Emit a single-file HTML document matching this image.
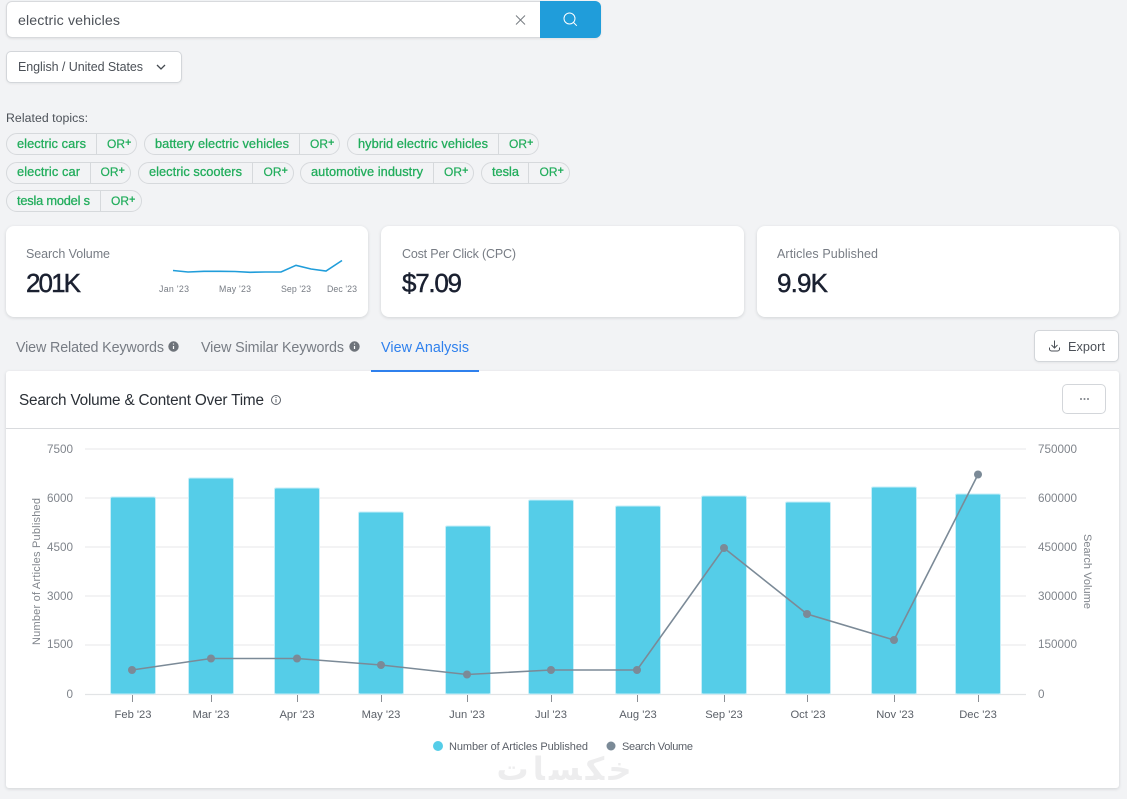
<!DOCTYPE html>
<html><head><meta charset="utf-8"><style>
html,body{margin:0;padding:0;width:1127px;height:799px;overflow:hidden;background:#f2f3f5;font-family:"Liberation Sans",sans-serif}
.b{position:absolute;box-sizing:border-box}
.card{position:absolute;background:#fff;border-radius:8px;box-shadow:0 1px 3px rgba(60,70,80,.18)}
svg{position:absolute;left:0;top:0}
.chip{fill:#f2f3f5;stroke:#d6d9dc}
.c{font-size:12.8px;fill:#22ad5c;stroke:#22ad5c;stroke-width:.28px}
.o{font-size:12px;fill:#22ad5c;stroke:#22ad5c;stroke-width:.2px}
.p{font-size:11px;font-weight:700;fill:#22ad5c}
.ax{font-size:11.7px;fill:#80858c}
.mo{font-size:11.2px;fill:#5b6068;text-anchor:middle}
.big{font-size:26px;fill:#1a2030;stroke:#1a2030;stroke-width:.45px}
</style></head><body>
<div class="b" style="left:6px;top:1px;width:595px;height:37px;background:#fff;border:1px solid #d8dadd;border-radius:6px;box-shadow:0 1px 2px rgba(0,0,0,.08)"></div>
<div class="b" style="left:540px;top:1px;width:61px;height:37px;background:#209dda;border-radius:0 6px 6px 0"></div>
<div class="b" style="left:6px;top:51px;width:176px;height:32px;background:#fff;border:1px solid #d3d6da;border-radius:5px;box-shadow:0 1px 2px rgba(0,0,0,.06)"></div>
<div class="card" style="left:6px;top:226px;width:362px;height:91px"></div>
<div class="card" style="left:381px;top:226px;width:363px;height:91px"></div>
<div class="card" style="left:757px;top:226px;width:362px;height:91px"></div>
<div class="b" style="left:1034px;top:330px;width:85px;height:32px;background:#fff;border:1px solid #d3d6da;border-radius:5px;box-shadow:0 1px 2px rgba(0,0,0,.06)"></div>
<div class="card" style="left:6px;top:371px;width:1113px;height:417px;border-radius:3px"></div>
<div class="b" style="left:6px;top:428px;width:1113px;height:1px;background:#d9dbde"></div>
<div class="b" style="left:1062px;top:384px;width:44px;height:30px;background:#fff;border:1px solid #d3d6da;border-radius:5px"></div>
<div class="b" style="left:371px;top:370px;width:108px;height:2px;background:#2f80ed"></div>

<svg width="1127" height="799" viewBox="0 0 1127 799" xmlns="http://www.w3.org/2000/svg">
<text x="18" y="25" font-size="14.200" fill="#4c5158" textLength="102">electric vehicles</text>
<path d="M516 15.500l9 9M525 15.500l-9 9" stroke="#777c82" stroke-width="1" fill="none"/>
<circle cx="569.500" cy="18.500" r="5.500" stroke="#fff" stroke-width="1" fill="none"/><path d="M573.400 22.400l3.400 3.400" stroke="#fff" stroke-width="1"/>
<text x="18" y="71" font-size="12.500" fill="#4c5158" textLength="125">English / United States</text>
<path d="M157 65l4 4 4-4" stroke="#444a50" stroke-width="1.300" fill="none"/>
<text x="6" y="122" font-size="12.300" fill="#4c5158" textLength="82">Related topics:</text>

<g>
<rect class="chip" x="6.500" y="133.500" width="130" height="21" rx="10.500"/><path d="M96.500 134v21" stroke="#d6d9dc"/>
<text class="c" x="17" y="148" textLength="69">electric cars</text><text class="o" x="107" y="148" textLength="18">OR</text><text class="p" x="125" y="146">+</text>
<rect class="chip" x="144.500" y="133.500" width="195" height="21" rx="10.500"/><path d="M299.500 134v21" stroke="#d6d9dc"/>
<text class="c" x="155" y="148" textLength="134">battery electric vehicles</text><text class="o" x="310" y="148" textLength="18">OR</text><text class="p" x="328" y="146">+</text>
<rect class="chip" x="347.500" y="133.500" width="191" height="21" rx="10.500"/><path d="M498.500 134v21" stroke="#d6d9dc"/>
<text class="c" x="358" y="148" textLength="130">hybrid electric vehicles</text><text class="o" x="509" y="148" textLength="18">OR</text><text class="p" x="527" y="146">+</text>

<rect class="chip" x="6.500" y="162.500" width="124" height="21" rx="10.500"/><path d="M90.500 163v21" stroke="#d6d9dc"/>
<text class="c" x="17" y="176" textLength="63">electric car</text><text class="o" x="100.500" y="176" textLength="18">OR</text><text class="p" x="118.500" y="174">+</text>
<rect class="chip" x="138.500" y="162.500" width="155" height="21" rx="10.500"/><path d="M252.500 163v21" stroke="#d6d9dc"/>
<text class="c" x="149" y="176" textLength="93">electric scooters</text><text class="o" x="263.500" y="176" textLength="18">OR</text><text class="p" x="281.500" y="174">+</text>
<rect class="chip" x="300.500" y="162.500" width="173" height="21" rx="10.500"/><path d="M433.500 163v21" stroke="#d6d9dc"/>
<text class="c" x="311" y="176" textLength="112">automotive industry</text><text class="o" x="444" y="176" textLength="18">OR</text><text class="p" x="462" y="174">+</text>
<rect class="chip" x="481.500" y="162.500" width="88" height="21" rx="10.500"/><path d="M528.500 163v21" stroke="#d6d9dc"/>
<text class="c" x="492" y="176" textLength="27">tesla</text><text class="o" x="539.500" y="176" textLength="18">OR</text><text class="p" x="557.500" y="174">+</text>

<rect class="chip" x="6.500" y="190.500" width="135" height="21" rx="10.500"/><path d="M100.500 191v21" stroke="#d6d9dc"/>
<text class="c" x="17" y="205" textLength="73">tesla model s</text><text class="o" x="111" y="205" textLength="18">OR</text><text class="p" x="129" y="203">+</text>
</g>

<text x="26" y="258" font-size="12.500" fill="#777c84" textLength="84">Search Volume</text>
<text class="big" x="26" y="292" textLength="55">201K</text>
<polyline points="173,270.500 188,272 204,271.300 220,271.300 235,271.500 250,272.300 265,272 281,272 296,265.300 311,269 326,271 342,260.500" fill="none" stroke="#209dda" stroke-width="1.600"/>
<g font-size="8.800" fill="#777c84">
<text x="159" y="292" textLength="30">Jan '23</text><text x="219" y="292" textLength="32">May '23</text><text x="281" y="292" textLength="30">Sep '23</text><text x="327" y="292" textLength="30">Dec '23</text>
</g>
<text x="402" y="258" font-size="12.500" fill="#777c84" textLength="114">Cost Per Click (CPC)</text>
<text class="big" x="402" y="292" textLength="60">$7.09</text>
<text x="777" y="258" font-size="12.500" fill="#777c84" textLength="101">Articles Published</text>
<text class="big" x="777" y="292" textLength="51">9.9K</text>

<text x="16" y="352" font-size="14.300" fill="#777c84" textLength="148">View Related Keywords</text>
<circle cx="173.500" cy="346.500" r="5.200" fill="#6e737a"/><path d="M173.500 346v3M173.500 343.500v1" stroke="#fff" stroke-width="1.200"/>
<text x="201" y="352" font-size="14.300" fill="#777c84" textLength="143">View Similar Keywords</text>
<circle cx="354.500" cy="346.500" r="5.200" fill="#6e737a"/><path d="M354.500 346v3M354.500 343.500v1" stroke="#fff" stroke-width="1.200"/>
<text x="381" y="352" font-size="14.300" fill="#2f80ed" textLength="88">View Analysis</text>

<path d="M1054.500 340.500v7M1051.500 345l3 3 3-3M1049.500 347.500v1.500a2 2 0 0 0 2 2h6a2 2 0 0 0 2-2v-1.500" fill="none" stroke="#4c5158" stroke-width="1"/>
<text x="1068" y="351" font-size="12.700" fill="#4c5158" textLength="37">Export</text>

<text x="19" y="405" font-size="15.300" fill="#2a2f36" textLength="245">Search Volume &amp; Content Over Time</text>
<circle cx="276" cy="400" r="4.500" fill="none" stroke="#5b6068"/><path d="M276 399v3.500M276 397v1" stroke="#5b6068"/>
<g fill="#7b8086"><circle cx="1081" cy="399" r="1"/><circle cx="1084.500" cy="399" r="1"/><circle cx="1088" cy="399" r="1"/></g>

<g stroke="#ececee" stroke-width="1.300"><path d="M85 449H1026M85 498H1026M85 547H1026M85 596H1026M85 645H1026"/></g>
<path d="M85 694.500H1026" stroke="#e2e4e6" stroke-width="1.300"/>
<g fill="#55cde8" stroke="#c6eef8" stroke-width="1">
<rect x="110.500" y="497" width="45" height="197" rx="1.500"/>
<rect x="188.500" y="478" width="45" height="216" rx="1.500"/>
<rect x="274.500" y="488" width="45" height="206" rx="1.500"/>
<rect x="358.500" y="512" width="45" height="182" rx="1.500"/>
<rect x="445.500" y="526" width="45" height="168" rx="1.500"/>
<rect x="528.500" y="500" width="45" height="194" rx="1.500"/>
<rect x="615.500" y="506" width="45" height="188" rx="1.500"/>
<rect x="701.500" y="496" width="45" height="198" rx="1.500"/>
<rect x="785.500" y="502" width="45" height="192" rx="1.500"/>
<rect x="871.500" y="487" width="45" height="207" rx="1.500"/>
<rect x="955.500" y="494" width="45" height="200" rx="1.500"/>
</g>
<polyline points="132,670 211,658.500 297,658.500 381,665 467,674.500 551,670 637,670 724,548 807,614 894,640 978,474.500" fill="none" stroke="#7b8a97" stroke-width="1.600"/>
<g fill="#7b8a97"><circle cx="132" cy="670" r="4"/><circle cx="211" cy="658.500" r="4"/><circle cx="297" cy="658.500" r="4"/><circle cx="381" cy="665" r="4"/><circle cx="467" cy="674.500" r="4"/><circle cx="551" cy="670" r="4"/><circle cx="637" cy="670" r="4"/><circle cx="724" cy="548" r="4"/><circle cx="807" cy="614" r="4"/><circle cx="894" cy="640" r="4"/><circle cx="978" cy="474.500" r="4"/></g>
<g stroke="#8a8e94"><path d="M132.500 695v7M211.500 695v7M297.500 695v7M381.500 695v7M467.500 695v7M551.500 695v7M637.500 695v7M724.500 695v7M807.500 695v7M894.500 695v7M978.500 695v7"/></g>
<g>
<text class="mo" x="133" y="718">Feb '23</text><text class="mo" x="211" y="718">Mar '23</text><text class="mo" x="297" y="718">Apr '23</text><text class="mo" x="381" y="718">May '23</text><text class="mo" x="467" y="718">Jun '23</text><text class="mo" x="551" y="718">Jul '23</text><text class="mo" x="638" y="718">Aug '23</text><text class="mo" x="724" y="718">Sep '23</text><text class="mo" x="808" y="718">Oct '23</text><text class="mo" x="895" y="718">Nov '23</text><text class="mo" x="978" y="718">Dec '23</text>
</g>
<g text-anchor="end">
<text class="ax" x="73" y="453">7500</text><text class="ax" x="73" y="502">6000</text><text class="ax" x="73" y="551">4500</text><text class="ax" x="73" y="600">3000</text><text class="ax" x="73" y="648">1500</text><text class="ax" x="73" y="698">0</text>
</g>
<g>
<text class="ax" x="1038" y="453">750000</text><text class="ax" x="1038" y="502">600000</text><text class="ax" x="1038" y="551">450000</text><text class="ax" x="1038" y="600">300000</text><text class="ax" x="1038" y="648">150000</text><text class="ax" x="1038" y="698">0</text>
</g>
<text class="ax" transform="translate(40,645) rotate(-90)" textLength="147" style="font-size:11px">Number of Articles Published</text>
<text class="ax" transform="translate(1084,534) rotate(90)" textLength="75" style="font-size:11px">Search Volume</text>
<circle cx="438" cy="746" r="5" fill="#55cde8"/><text x="449" y="750" font-size="11" fill="#5b6068" textLength="139">Number of Articles Published</text>
<circle cx="611" cy="746" r="4.500" fill="#7b8a97"/><text x="622" y="750" font-size="11" fill="#5b6068" textLength="71">Search Volume</text>
<text x="564" y="780" font-size="32" text-anchor="middle" fill="#ededee" font-weight="700" style="font-family:'DejaVu Sans',sans-serif" textLength="135">خکسات</text>
</svg>
</body></html>
